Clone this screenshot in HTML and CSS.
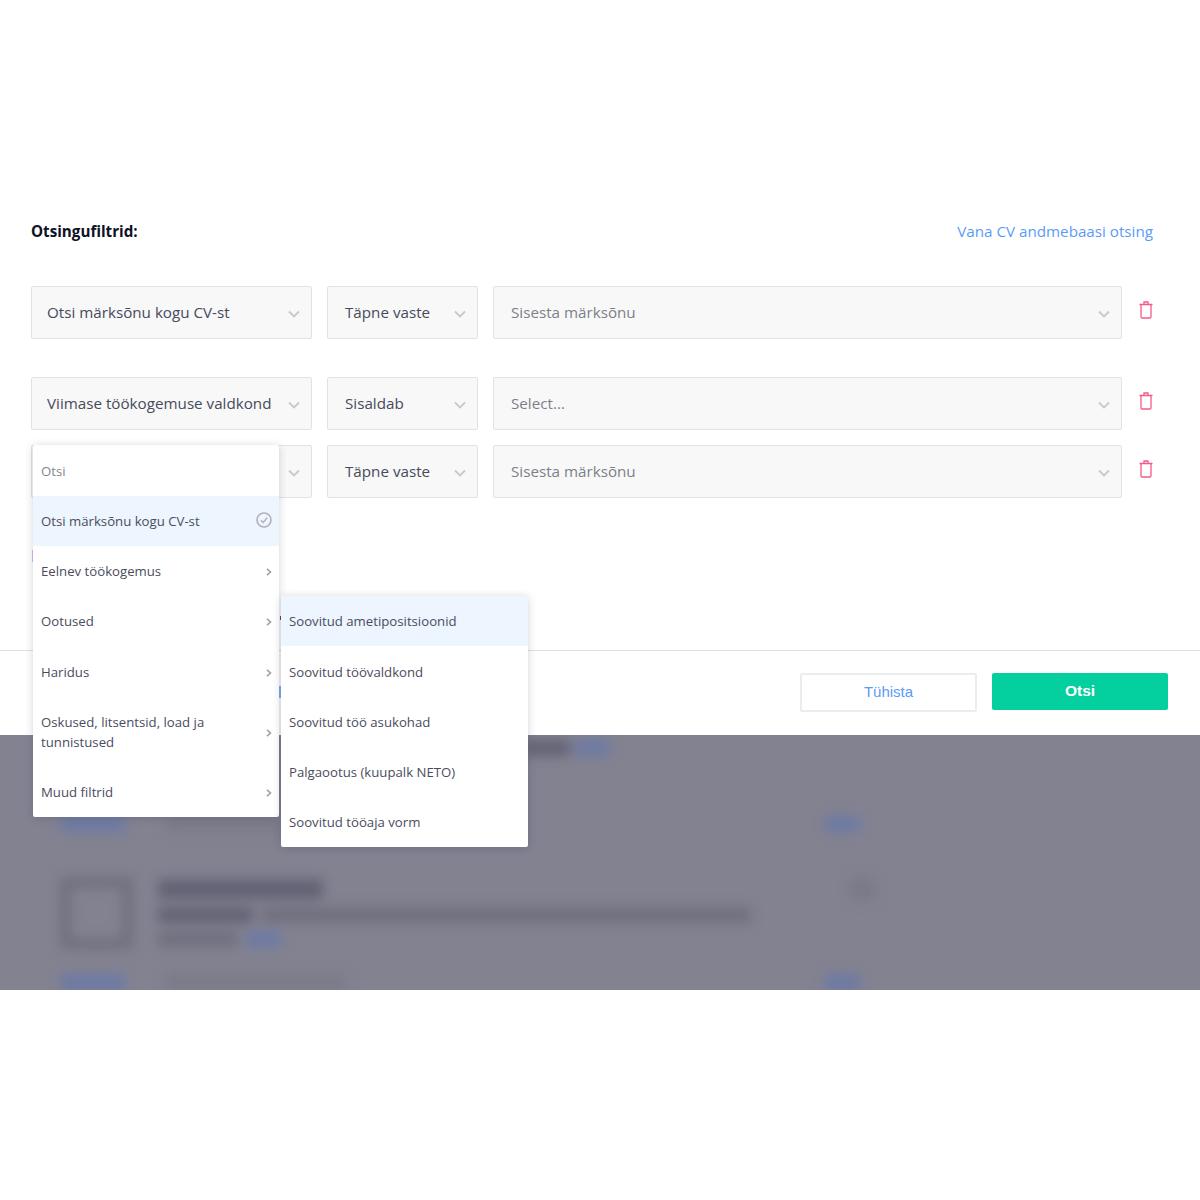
FILE: index.html
```html
<!DOCTYPE html>
<html lang="et">
<head>
<meta charset="utf-8">
<title>Otsingufiltrid</title>
<link rel="stylesheet" href="styles.css">
</head>
<body>
<svg class="sprite" width="0" height="0" aria-hidden="true">
  <symbol id="chev" viewBox="0 0 12 8"><path d="M1 1.5 6 6.5 11 1.5" fill="none" stroke="#c9c9cc" stroke-width="1.8"/></symbol>
  <symbol id="trash" viewBox="0 0 14 18"><path d="M.5 3.5h13M5 3.3V1h4v2.3M2 3.5v12.3c0 .8.5 1.2 1.2 1.2h7.6c.7 0 1.2-.4 1.2-1.2V3.5" fill="none" stroke="#f65a86" stroke-width="1.3"/></symbol>
  <symbol id="side" viewBox="0 0 6 8"><path d="M1 .8 4.5 4 1 7.2" fill="none" stroke="#a0a0a8" stroke-width="1.6"/></symbol>
</svg>
<main class="page">
  <section class="modal">
    <header class="head">
      <h2 class="title">Otsingufiltrid:</h2>
      <a class="link">Vana CV andmebaasi otsing</a>
    </header>
    <div class="rows">
      <div class="row">
        <div class="select s1"><span class="val">Otsi märksõnu kogu CV-st</span><svg class="chev"><use href="#chev"/></svg></div>
        <div class="select s2"><span class="val">Täpne vaste</span><svg class="chev"><use href="#chev"/></svg></div>
        <div class="select s3"><span class="ph">Sisesta märksõnu</span><svg class="chev"><use href="#chev"/></svg></div>
        <svg class="trash"><use href="#trash"/></svg>
      </div>
      <div class="row r2">
        <div class="select s1"><span class="val">Viimase töökogemuse valdkond</span><svg class="chev"><use href="#chev"/></svg></div>
        <div class="select s2"><span class="val">Sisaldab</span><svg class="chev"><use href="#chev"/></svg></div>
        <div class="select s3"><span class="ph">Select...</span><svg class="chev"><use href="#chev"/></svg></div>
        <svg class="trash"><use href="#trash"/></svg>
      </div>
      <div class="row r3">
        <div class="select s1 covered"><svg class="chev"><use href="#chev"/></svg></div>
        <div class="select s2"><span class="val">Täpne vaste</span><svg class="chev"><use href="#chev"/></svg></div>
        <div class="select s3"><span class="ph">Sisesta märksõnu</span><svg class="chev"><use href="#chev"/></svg></div>
        <svg class="trash"><use href="#trash"/></svg>
      </div>
    </div>
    <footer class="foot">
      <button class="btn ghost">Tühista</button>
      <button class="btn primary">Otsi</button>
    </footer>
  </section>
  <section class="backdrop">
    <div class="blurred">
      <div class="b-top"><i class="bar dark w45"></i><i class="bar blue w35"></i></div>
      <div class="b-meta"><i class="bar blue w65"></i><i class="bar faint w120"></i><i class="bar blue w35 end"></i></div>
      <div class="b-card">
        <i class="logo"></i>
        <div class="b-lines">
          <i class="bar dark w165 tall"></i>
          <div class="b-line"><i class="bar dark w95"></i><i class="bar mid w490"></i></div>
          <div class="b-line"><i class="bar mid w80"></i><i class="bar blue w35"></i></div>
        </div>
        <i class="bar faint w25 end"></i>
      </div>
      <div class="b-meta last"><i class="bar blue w65"></i><i class="bar faint w180"></i><i class="bar blue w35 end"></i></div>
    </div>
  </section>
  <i class="peek pink"></i>
  <i class="peek red"></i>
  <i class="peek sky"></i>
  <div class="menu">
    <div class="search">Otsi</div>
    <div class="item active">Otsi märksõnu kogu CV-st
      <svg class="check" viewBox="0 0 16 16"><circle cx="8" cy="8" r="7" fill="none" stroke="#b0b0b8" stroke-width="1.6"/><path d="M4.8 8.2 7.2 10.4 11.2 5.8" fill="none" stroke="#b0b0b8" stroke-width="1.4"/></svg>
    </div>
    <div class="item">Eelnev töökogemus<svg class="side"><use href="#side"/></svg></div>
    <div class="item">Ootused<svg class="side"><use href="#side"/></svg></div>
    <div class="item nudge">Haridus<svg class="side"><use href="#side"/></svg></div>
    <div class="item double"><span class="wrap">Oskused, litsentsid, load ja tunnistused</span><svg class="side"><use href="#side"/></svg></div>
    <div class="item">Muud filtrid<svg class="side"><use href="#side"/></svg></div>
  </div>
  <div class="menu sub">
    <div class="item active">Soovitud ametipositsioonid</div>
    <div class="item nudge">Soovitud töövaldkond</div>
    <div class="item nudge">Soovitud töö asukohad</div>
    <div class="item nudge">Palgaootus (kuupalk NETO)</div>
    <div class="item nudge">Soovitud tööaja vorm</div>
  </div>
</main>
</body>
</html>
```
FILE: styles.css
```css
* { box-sizing: border-box; }
html, body { margin: 0; background: #fff; }
body { font-family: "Open Sans", sans-serif; color: #3f4150; }
.sprite { position: absolute; }
.page { position: relative; width: 1200px; height: 1200px; overflow: hidden; }

.modal { height: 735px; padding-top: 220px; display: flex; flex-direction: column; background: #fff; }
.head { height: 22px; padding: 0 47px 0 31px; display: flex; justify-content: space-between; align-items: center; }
.title { margin: 0; font-size: 15.2px; font-weight: 700; color: #0d1226; }
.link { font-size: 15.2px; color: #5b9bf8; }

.rows { margin-top: 44px; padding-left: 31px; height: 364px; }
.row { display: flex; align-items: center; height: 53px; gap: 15px; }
.r2 { margin-top: 38px; }
.r3 { margin-top: 15px; }
.select { height: 53px; display: flex; align-items: center; justify-content: space-between; background: #f8f8f8; border: 1px solid #e2e2e6; border-radius: 2px; font-size: 15.2px; white-space: nowrap; }
.s1 { width: 281px; padding: 0 11px 2px 15px; }
.s2 { width: 151px; padding: 0 11px 2px 17px; }
.s3 { width: 629px; padding: 0 11px 2px 17px; }
.covered { justify-content: flex-end; }
.val { color: #474a5b; }
.ph { color: #7d7f88; }
.chev { width: 12px; height: 8px; flex: none; margin-top: 4px; }
.trash { width: 14px; height: 18px; margin: -5px 0 0 2px; flex: none; }

.foot { flex: 1; border-top: 1px solid #dfdfe3; display: flex; justify-content: flex-end; align-items: flex-start; gap: 15px; padding: 22px 32px 0 0; }
.btn { width: 177px; font: 15px "Liberation Sans", Arial, sans-serif; border-radius: 2px; padding: 0 0 2px; }
.ghost { height: 39px; background: #fff; border: 2px solid #ececef; color: #5b9bf8; }
.primary { width: 176px; height: 37px; background: #04cf9f; border: 0; color: #fff; font-weight: 700; font-size: 15.5px; }

.backdrop { height: 255px; background: #838291; overflow: hidden; }
.blurred { height: 100%; filter: blur(6px); padding: 5px 340px 0 60px; display: flex; flex-direction: column; }
.bar { display: block; height: 16px; flex: none; border-radius: 2px; }
.dark { background: #636375; }
.mid { background: #70707f; }
.faint { background: #7a7a89; }
.blue { background: #6d7aa4; }
.tall { height: 20px; }
.w25 { width: 25px; } .w35 { width: 35px; } .w45 { width: 45px; } .w65 { width: 65px; }
.w80 { width: 80px; } .w95 { width: 95px; } .w120 { width: 120px; } .w165 { width: 165px; }
.w180 { width: 180px; } .w490 { width: 490px; }
.b-top { display: flex; gap: 5px; margin-left: 465px; }
.b-meta { display: flex; gap: 40px; align-items: center; margin-top: 60px; }
.b-meta .end { margin-left: auto; margin-right: 0; }
.b-card { display: flex; margin-top: 45px; gap: 25px; height: 80px; }
.logo { width: 73px; height: 72px; flex: none; border: 11px solid #70707f; }
.b-lines { display: flex; flex-direction: column; gap: 8px; padding-top: 2px; }
.b-line { display: flex; gap: 8px; }
.b-card .end { margin-left: auto; margin-right: -15px; height: 24px; }
.b-meta.last { margin-top: 18px; }

.peek { position: absolute; display: block; }
.pink { left: 32px; top: 550px; width: 1px; height: 12px; background: #d9b7f0; }
.red { left: 280px; top: 616px; width: 1px; height: 4px; background: #8c3b4d; }
.sky { left: 279px; top: 686px; width: 2px; height: 12px; background: #7fb6f3; }

.menu { position: absolute; left: 33px; top: 445px; width: 246px; background: #fff; border-radius: 2px; box-shadow: 0 1px 8px rgba(40, 40, 70, .2); font-size: 13.2px; color: #4a4c5e; }
.sub { left: 281px; top: 596px; width: 247px; padding-bottom: 1px; }
.search { height: 51px; padding: 0 8px; display: flex; align-items: center; color: #85868f; }
.item { height: 50px; padding: 0 7px 0 8px; display: flex; align-items: center; justify-content: space-between; }
.item.nudge { padding-top: 2px; }
.item.active { background: #edf5fe; }
.double { height: 71px; line-height: 20px; }
.wrap { width: 190px; }
.side { width: 6px; height: 8px; flex: none; margin-top: 2px; }
.check { width: 16px; height: 16px; flex: none; margin-top: -2px; }
```
